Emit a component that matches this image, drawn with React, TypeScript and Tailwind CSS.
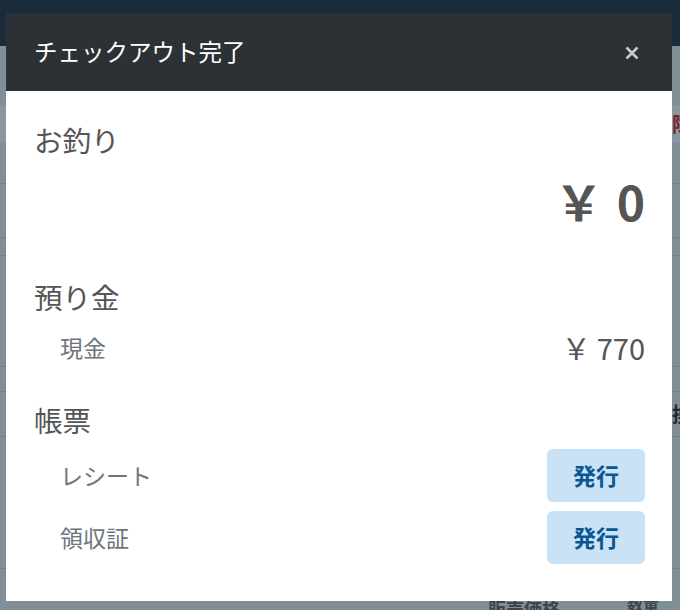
import React from "react";

const font = { fontFamily: '"Noto Sans CJK JP", "Noto Sans", sans-serif' };

function Background() {
  return (
    <div className="flex flex-col w-[680px] h-[610px] bg-[#808e98] overflow-hidden">
      <div className="h-[46px] bg-[#1a2b3b] shrink-0" />
      <div className="h-[59px] shrink-0" />
      <div className="h-[38px] shrink-0 bg-[#8a979f] flex justify-end items-center overflow-hidden">
        <span className="text-[#7a1f2e] text-[20px] font-bold mr-[-12px]">除</span>
      </div>
      <div className="h-[41px] shrink-0 border-b border-[#72808a]" />
      <div className="h-[54px] shrink-0 border-b border-[#72808a]" />
      <div className="h-[18px] shrink-0 border-b border-[#72808a]" />
      <div className="h-[111px] shrink-0 border-b border-[#72808a]" />
      <div className="h-[25px] shrink-0 border-b border-[#72808a]" />
      <div className="h-[45px] shrink-0 border-b border-[#72808a] flex justify-end items-center overflow-hidden">
        <span className="text-[#1f2a33] text-[20px] font-bold mr-[-12px]">換</span>
      </div>
      <div className="h-[132px] shrink-0 border-b border-[#72808a]" />
      <div className="flex-1 relative">
        <span className="absolute left-[488px] top-[30px] text-[#3a4650] text-[18px] leading-none font-bold">販売価格</span>
        <span className="absolute left-[627px] top-[26px] text-[#3a4650] text-[16px] leading-none font-bold">数量</span>
      </div>
    </div>
  );
}

function Row({ label, right, h }: { label: string; right: React.ReactNode; h: string }) {
  return (
    <div className={`flex items-center justify-between ${h}`}>
      <span className="pl-[26px] text-[23px] text-[#6c757d] leading-none">{label}</span>
      {right}
    </div>
  );
}

function IssueButton() {
  return (
    <button className="w-[98px] h-[53px] rounded-[6px] bg-[#c9e2f6] text-[#0b5690] text-[23px] font-bold leading-none flex items-center justify-center">
      発行
    </button>
  );
}

export default function App() {
  return (
    <div className="relative w-[680px] h-[610px] overflow-hidden" style={font}>
      <Background />
      <div className="absolute left-[6px] top-[13px] w-[666px] h-[588px] bg-white flex flex-col">
        <div className="h-[78px] bg-[#2c3136] flex items-center justify-between pl-[28px] pr-[33px] shrink-0">
          <span className="text-white text-[23.5px] leading-none">チェックアウト完了</span>
          <svg width="14" height="14" viewBox="0 0 14 14" className="mt-[1px]">
            <path d="M1.5 1.5 L12.5 12.5 M12.5 1.5 L1.5 12.5" stroke="#c9c9c9" strokeWidth="2.6" strokeLinecap="butt" />
          </svg>
        </div>
        <div className="flex flex-col pr-[27px] pl-[28px] pt-[20px]">
          <div className="h-[58px] flex items-center text-[28.5px] text-[#555] leading-none">お釣り</div>
          <div className="h-[68px] flex items-center justify-end font-bold text-[#555] leading-none pb-[6px]">
            <span className="text-[48px]">￥</span>
            <span className="text-[48px] ml-[14px]">0</span>
          </div>
          <div className="h-[58px] mt-[31px] flex items-center text-[28.5px] text-[#555] leading-none">預り金</div>
          <Row
            label="現金"
            h="h-[42px]"
            right={
              <span className="flex items-center text-[29px] text-[#555] leading-none">
                <span>￥</span>
                <span className="ml-[6px]">770</span>
              </span>
            }
          />
          <div className="h-[58px] mt-[23px] flex items-center text-[28.5px] text-[#555] leading-none">帳票</div>
          <Row label="レシート" h="h-[53px]" right={<IssueButton />} />
          <div className="h-[9px]" />
          <Row label="領収証" h="h-[53px]" right={<IssueButton />} />
        </div>
      </div>
    </div>
  );
}
